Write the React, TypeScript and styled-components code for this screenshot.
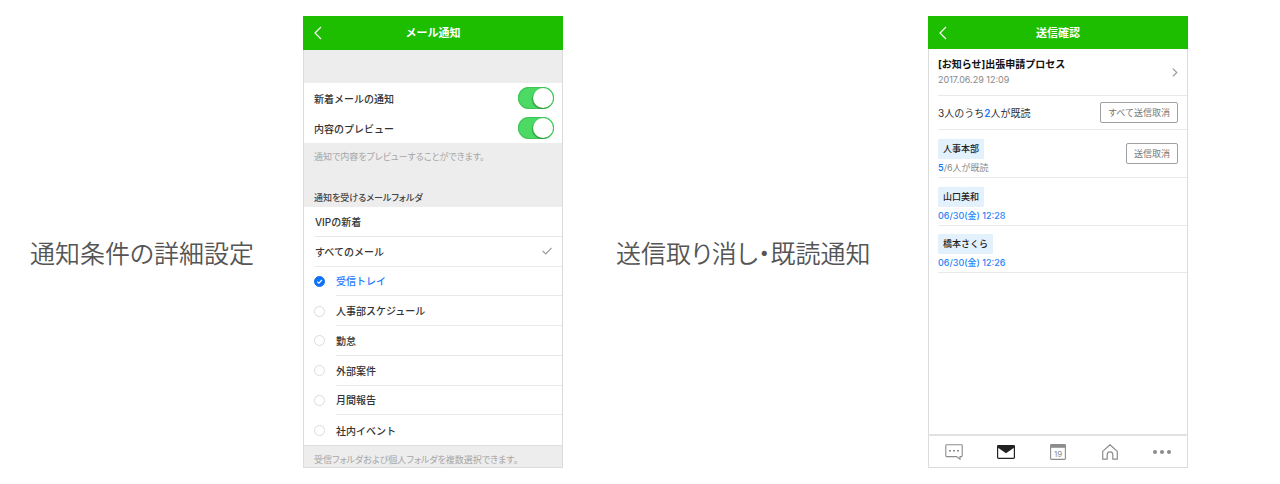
import React from "react";
import styled, { createGlobalStyle } from "styled-components";

const Global = createGlobalStyle`
  *, *::before, *::after { box-sizing: border-box; }
  body {
    margin: 0;
    background: #fff;
    color: #333;
    font-family: Inter, "Noto Sans CJK JP", sans-serif;
  }
  h1, h2, h3, p, ul { margin: 0; padding: 0; }
  ul { list-style: none; }
`;

const Page = styled.main`
  display: grid;
  grid-template-columns: 273fr 313fr 312fr 260fr;
  align-items: center;
  padding: 16px 92px 16px 30px;
`;

const Caption = styled.h2`
  padding-top: 20px;
  font-family: "Noto Sans CJK JP", sans-serif;
  font-size: 25px;
  font-weight: 350;
  line-height: 36px;
  font-feature-settings: "palt";
  color: #555;
  white-space: nowrap;
`;

const Phone = styled.section`
  display: flex;
  flex-direction: column;
  width: 260px;
  min-height: 452px;
  border: 1px solid #dcdcdc;
  border-top: 0;
  background: #fff;
`;

const TopBar = styled.header<{ $height: number }>`
  display: grid;
  grid-template-columns: 30px 1fr 30px;
  align-items: center;
  height: ${(p) => p.$height}px;
  margin: 0 -1px;
  background: #1dbe00;
`;

const Title = styled.h3`
  font-size: 11px;
  line-height: 16px;
  font-weight: 700;
  text-align: center;
  color: #fff;
`;

const IconButton = styled.button`
  display: flex;
  align-items: center;
  justify-content: center;
  padding: 0;
  border: 0;
  background: none;
  color: inherit;
`;

const BackButton = styled(IconButton)`
  height: 32px;
  color: #fff;
`;

const Band = styled.div<{ $height: number }>`
  display: flex;
  flex-direction: column;
  justify-content: space-between;
  height: ${(p) => p.$height}px;
  padding: 6px 10px 1px;
  background: #ededed;
`;

const Hint = styled.p`
  font-size: 9px;
  line-height: 15px;
  font-feature-settings: "palt";
  color: #a6a6a6;
  white-space: nowrap;
`;

const GroupTitle = styled.h4`
  margin: 0;
  font-size: 9px;
  line-height: 16px;
  font-weight: 500;
  font-feature-settings: "palt";
  color: #444;
`;

const SwitchRow = styled.label`
  display: flex;
  align-items: center;
  justify-content: space-between;
  height: 30px;
  padding: 0 8px 0 10px;
  font-size: 10px;
  font-weight: 500;
`;

const Switch = styled.input`
  appearance: none;
  display: flex;
  width: 36px;
  height: 22px;
  margin: 0;
  padding: 1px;
  border-radius: 11px;
  background: #bbb;
  &:checked {
    justify-content: flex-end;
    background: #4cd964;
    box-shadow: inset 0 0 0 1px #3fc457;
  }
  &::before {
    content: "";
    width: 20px;
    height: 20px;
    border-radius: 50%;
    background: #fff;
    box-shadow: -1px 1px 1px rgba(0, 70, 10, 0.4);
  }
`;

const FolderList = styled.ul`
  display: grid;
  grid-auto-rows: 1fr;
  height: 238px;
`;

const FolderItem = styled.li<{ $indent: number }>`
  display: flex;
  padding-left: 11px;
  & > label {
    display: flex;
    flex: 1;
    align-items: center;
  }
  & span {
    display: flex;
    flex: 1;
    align-items: center;
    align-self: stretch;
    justify-content: space-between;
    margin-left: ${(p) => p.$indent}px;
    padding-right: 10px;
    border-bottom: 1px solid #e9e9e9;
    font-size: 10px;
    font-weight: 500;
  }
  &:last-child span { border-bottom: 0; }
  & input:checked + span { color: #1a7bff; }
`;

const Radio = styled.input`
  appearance: none;
  width: 11px;
  height: 11px;
  margin: 0 0 0 -1px;
  border: 1px solid #dcdcdc;
  border-radius: 50%;
  &:checked {
    border-color: #0f72f5;
    background: #0f72f5 url("data:image/svg+xml,%3Csvg xmlns='http://www.w3.org/2000/svg' viewBox='0 0 9 9'%3E%3Cpath d='M2.2 4.6 3.9 6.2 6.9 3' fill='none' stroke='white' stroke-width='1.1'/%3E%3C/svg%3E");
  }
`;

const Footer = styled.footer`
  flex: 1;
  padding: 6px 10px 0;
  border-top: 1px solid #dedede;
  background: #ededed;
`;

const Line = styled.div<{ $height: number }>`
  display: flex;
  align-items: center;
  justify-content: space-between;
  height: ${(p) => p.$height}px;
  margin-left: 9px;
  padding-right: 9px;
  border-bottom: 1px solid #e9e9e9;
`;

const Recipient = styled.div`
  padding-top: 6px;
`;

const Subject = styled.p`
  font-size: 10px;
  line-height: 16px;
  font-weight: 700;
  color: #111;
`;

const Stamp = styled.p`
  font-size: 9px;
  line-height: 16px;
  color: #888;
`;

const ReadTotal = styled.p`
  font-size: 10px;
  line-height: 16px;
  color: #333;
`;

const Count = styled.b`
  font-weight: 600;
  color: #1a7bff;
`;

const OutlineButton = styled.button`
  height: 21px;
  padding: 0 7px;
  border: 1px solid #a0a0a0;
  border-radius: 2px;
  background: #fff;
  font: 400 9px/16px Inter, "Noto Sans CJK JP", sans-serif;
  color: #777;
`;

const Badge = styled.p`
  width: fit-content;
  padding: 0 5px;
  border-radius: 1px;
  background: #e3f1fd;
  font-size: 9px;
  line-height: 20px;
  font-weight: 500;
  color: #222;
`;

const ReadState = styled.p<{ $read?: boolean }>`
  margin-top: 2px;
  font-size: 9px;
  line-height: 14px;
  font-weight: ${(p) => (p.$read ? 500 : 400)};
  color: ${(p) => (p.$read ? "#2a83f7" : "#888")};
`;

const TabBar = styled.nav`
  display: grid;
  grid-template-columns: repeat(5, 1fr);
  height: 33px;
  margin: auto -1px 0;
  border-top: 2px solid #e2e2e2;
  color: #8c8c8c;
`;

const Back = () => (
  <BackButton aria-label="戻る">
    <svg width="8" height="14" viewBox="0 0 8 14" fill="none" stroke="currentColor" strokeWidth="1.2">
      <path d="M7 1 1 7l6 6" />
    </svg>
  </BackButton>
);

const folders = ["受信トレイ", "人事部スケジュール", "勤怠", "外部案件", "月間報告", "社内イベント"];

const NotifyPhone = () => (
  <Phone>
    <TopBar $height={34}>
      <Back />
      <Title>メール通知</Title>
    </TopBar>
    <Band $height={33} />
    <SwitchRow>
      新着メールの通知
      <Switch type="checkbox" role="switch" defaultChecked />
    </SwitchRow>
    <SwitchRow>
      内容のプレビュー
      <Switch type="checkbox" role="switch" defaultChecked />
    </SwitchRow>
    <Band $height={64}>
      <Hint>通知で内容をプレビューすることができます。</Hint>
      <GroupTitle>通知を受けるメールフォルダ</GroupTitle>
    </Band>
    <FolderList>
      <FolderItem $indent={0}>
        <span>VIPの新着</span>
      </FolderItem>
      <FolderItem $indent={0}>
        <span>
          すべてのメール
          <svg width="10" height="8" viewBox="0 0 10 8" fill="none" stroke="#999" strokeWidth="1.2">
            <path d="M.6 3.8 3.8 7 9.5.8" />
          </svg>
        </span>
      </FolderItem>
      {folders.map((name, i) => (
        <FolderItem key={name} $indent={11}>
          <label>
            <Radio type="radio" name="folder" defaultChecked={i === 0} />
            <span>{name}</span>
          </label>
        </FolderItem>
      ))}
    </FolderList>
    <Footer>
      <Hint>受信フォルダおよび個人フォルダを複数選択できます。</Hint>
    </Footer>
  </Phone>
);

const SentPhone = () => (
  <Phone>
    <TopBar $height={33}>
      <Back />
      <Title>送信確認</Title>
    </TopBar>
    <Line $height={47}>
      <div>
        <Subject>[お知らせ]出張申請プロセス</Subject>
        <Stamp>2017.06.29 12:09</Stamp>
      </div>
      <IconButton aria-label="詳細">
        <svg width="6" height="9" viewBox="0 0 6 9" fill="none" stroke="#999" strokeWidth="1.2">
          <path d="M.8.6 4.8 4.5.8 8.4" />
        </svg>
      </IconButton>
    </Line>
    <Line $height={34}>
      <ReadTotal>
        3人のうち<Count>2</Count>人が既読
      </ReadTotal>
      <OutlineButton>すべて送信取消</OutlineButton>
    </Line>
    <Line $height={48}>
      <Recipient>
        <Badge>人事本部</Badge>
        <ReadState>
          <Count>5</Count>/6人が既読
        </ReadState>
      </Recipient>
      <OutlineButton>送信取消</OutlineButton>
    </Line>
    <Line $height={48}>
      <Recipient>
        <Badge>山口美和</Badge>
        <ReadState $read>06/30(金) 12:28</ReadState>
      </Recipient>
    </Line>
    <Line $height={47}>
      <Recipient>
        <Badge>橋本さくら</Badge>
        <ReadState $read>06/30(金) 12:26</ReadState>
      </Recipient>
    </Line>
    <TabBar>
      <IconButton aria-label="トーク">
        <svg width="18" height="16" viewBox="0 0 18 16" fill="none" stroke="currentColor" strokeWidth="1.1">
          <path d="M1.6.8h14.8q.8 0 .8.8v10.2q0 .8-.8.8H15v2.6l-3.4-2.6h-10q-.8 0-.8-.8V1.6q0-.8.8-.8z" />
          <path d="M4 6.8h2M8 6.8h2M12 6.8h2" strokeWidth="1.6" />
        </svg>
      </IconButton>
      <IconButton aria-label="メール">
        <svg width="18" height="14" viewBox="0 0 18 14">
          <rect x=".6" y=".6" width="16.8" height="12.8" rx=".8" fill="#fff" stroke="#222" strokeWidth="1.2" />
          <path d="M.6.6h16.8v1.8L9 8.2.6 2.4z" fill="#222" />
        </svg>
      </IconButton>
      <IconButton aria-label="カレンダー">
        <svg width="16" height="16" viewBox="0 0 16 16">
          <rect x=".6" y=".6" width="14.8" height="14.8" rx=".8" fill="none" stroke="currentColor" strokeWidth="1.1" />
          <path d="M.6.6h14.8v3.2H.6z" fill="currentColor" />
          <text x="8" y="12.5" textAnchor="middle" fontSize="8" fontFamily="Inter, sans-serif" fill="currentColor">19</text>
        </svg>
      </IconButton>
      <IconButton aria-label="ホーム">
        <svg width="16" height="16" viewBox="0 0 16 16" fill="none" stroke="currentColor" strokeWidth="1.2" strokeLinejoin="round">
          <path d="M8 .8.7 7.4V15.2h4.5v-4.5a2.8 2.8 0 0 1 5.600 0v4.5h4.5V7.4z" />
        </svg>
      </IconButton>
      <IconButton aria-label="その他">
        <svg width="18" height="4" viewBox="0 0 18 4" fill="currentColor">
          <circle cx="2" cy="2" r="2" />
          <circle cx="9" cy="2" r="2" />
          <circle cx="16" cy="2" r="2" />
        </svg>
      </IconButton>
    </TabBar>
  </Phone>
);

export default function App() {
  return (
    <>
      <Global />
      <Page lang="ja">
        <Caption>通知条件の詳細設定</Caption>
        <NotifyPhone />
        <Caption>送信取り消し・既読通知</Caption>
        <SentPhone />
      </Page>
    </>
  );
}
